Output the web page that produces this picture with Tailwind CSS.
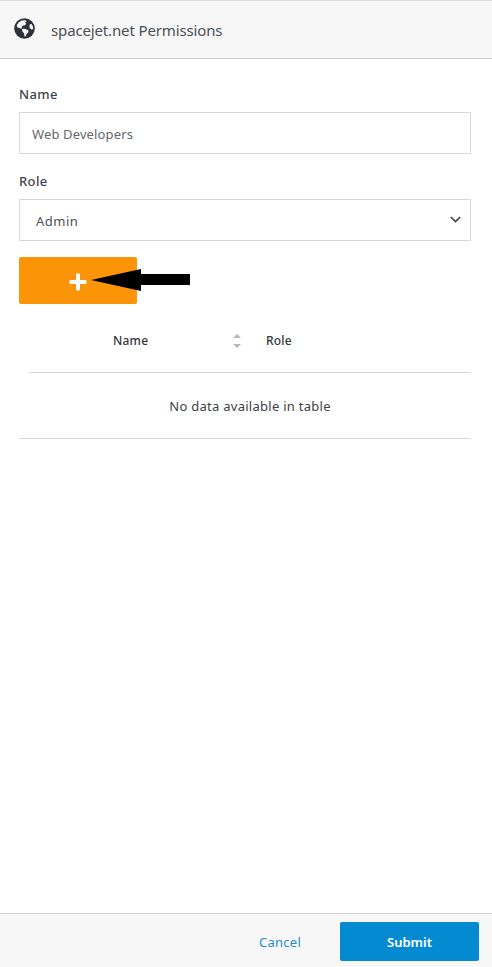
<!DOCTYPE html>
<html lang="en">
<head>
<meta charset="utf-8">
<title>spacejet.net Permissions</title>
<script src="https://cdn.jsdelivr.net/npm/@tailwindcss/browser@4"></script>
</head>
<body class="bg-white">
<div class="flex h-[967px] w-[492px] flex-col overflow-hidden font-['Noto_Sans','Open_Sans',sans-serif] text-[13px] text-[#4b4f57]">
  <header class="flex h-[59px] shrink-0 items-center border-y border-t-[#dadada] border-b-[#d0d0d0] bg-[#f7f7f7] pl-[14px]">
    <svg class="mb-[3px] size-[21px]" viewBox="0 0 21 21">
      <circle cx="10.5" cy="10.5" r="10.3" fill="#2c313c"/>
      <path fill="#f7f7f7" d="M4.6 4.4 7.4 2.5 11.6 2.2 12.6 3.8 11 4.5 12.3 5.8 10.9 7.2 9.2 7.5 7.4 9 8.4 10.4 6.8 10.5 3.6 9.4 2.6 7.4Z"/>
      <path fill="#f7f7f7" d="M8 11 10.6 10.7 14.4 12.3 14.3 14.4 12.8 15.8 11.6 18.6 10.5 18.5 10.1 15.4 8.3 13.3Z"/>
      <path fill="#f7f7f7" d="M16 6.2 17.6 5.9 19 8.6 19 11.2 17.4 11.4 15.7 9.9 15.4 7.8Z"/>
    </svg>
    <h1 class="ml-4 pt-[2px] text-[15px] tracking-[-0.14px] whitespace-nowrap">spacejet.net Permissions</h1>
  </header>

  <main class="flex grow flex-col pr-[21px] pl-[19px]">
    <label class="mt-[25px] text-[13px] leading-5 font-medium tracking-[0.4px] text-[#3f434c]">Name</label>
    <div class="mt-2 flex h-[42px] items-center border border-[#d8d8d8] pt-1 pl-3 text-[#64676c]"><span class="tracking-[0.13px]">Web Developers</span></div>
    <label class="mt-[17px] text-[13px] leading-5 font-medium tracking-[0.4px] text-[#3f434c]">Role</label>
    <div class="mt-2 flex h-[42px] items-center justify-between border border-[#d8d8d8] pt-1 pr-[9px] pl-4">
      <span class="tracking-[0.5px]">Admin</span>
      <svg class="mb-[5px] h-[7px] w-[11px]" viewBox="0 0 11 7" fill="none" stroke="#3f434c" stroke-width="1.7"><path d="M.8 1 5.5 5.5 10.2 1"/></svg>
    </div>
    <div class="relative mt-4 flex h-[47px] w-[118px] items-center justify-center rounded-[2px] bg-[#fb9407] pt-[2px]">
      <svg class="size-[18px]" viewBox="0 0 18 18" fill="#fff"><path d="M8 .5H10Q11 .5 11 1.5V7H16.5Q17.5 7 17.5 8V10Q17.5 11 16.5 11H11V16.5Q11 17.5 10 17.5H8Q7 17.5 7 16.5V11H1.5Q.5 11 .5 10V8Q.5 7 1.5 7H7V1.5Q7 .5 8 .5Z"/></svg>
      <svg class="absolute top-[11px] left-[72px] h-[24px] w-[100px]" viewBox="0 0 100 24"><path d="M0 12 50 1V6H99V17H50V23Z"/></svg>
    </div>

    <div class="ml-[10px] flex h-[69px] items-center border-b border-[#d8d8d8] pt-[6px] font-medium text-[#33363c]">
      <span class="ml-[84px] w-[120px] text-[12px] tracking-[0.2px]">Name</span>
      <svg class="h-[14px] w-[8px]" viewBox="0 0 8 14" fill="#b8b8b8"><path d="M0 4 4 0 8 4ZM0 10H8L4 14Z"/></svg>
      <span class="ml-[25px] text-[12px] tracking-[0.2px]">Role</span>
    </div>
    <div class="flex h-[66px] items-center justify-center border-b border-[#d8d8d8] pt-[2px] pl-[10px] text-[#3c3f45]"><span class="tracking-[0.27px]">No data available in table</span></div>
  </main>

  <footer class="flex h-[54px] shrink-0 items-center justify-end border-t border-[#d0d0d0] bg-[#f7f7f7] pt-[1px] pr-[13px]">
    <a class="mr-[39px] pt-[3px] text-[13px] tracking-[0.25px] text-[#2490c8]">Cancel</a>
    <button class="h-[39px] w-[139px] rounded-[2px] bg-[#048ad1] pt-[3px] font-semibold text-white">Submit</button>
  </footer>
</div>
</body>
</html>
